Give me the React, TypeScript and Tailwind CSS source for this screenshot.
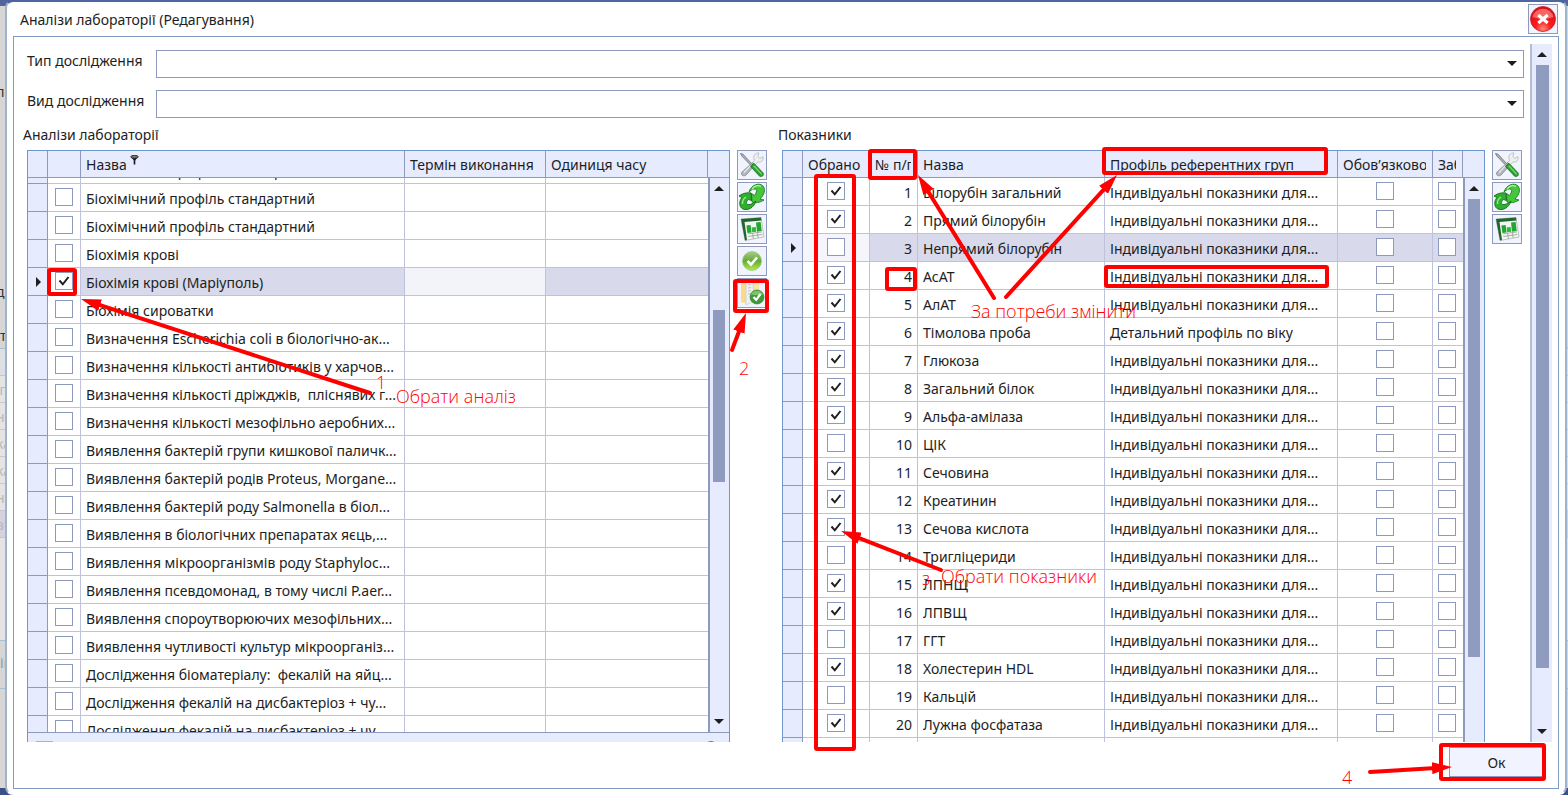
import { useState } from "react";
import type { ReactNode } from "react";
import clsx from "clsx";

type Analysis = { id: number; name: string };
type Indicator = { no: number; name: string; profile: string };

const ANALYSES: Analysis[] = [
  "Біохімічний профіль стандартний",
  "Біохімічний профіль стандартний",
  "Біохімічний профіль стандартний",
  "Біохімія крові",
  "Біохімія крові (Маріуполь)",
  "Біохімія сироватки",
  "Визначення Escherichia coli в біологічно-ак...",
  "Визначення кількості антибіотиків у харчов...",
  "Визначення кількості дріжджів,  пліснявих г...",
  "Визначення кількості мезофільно аеробних...",
  "Виявлення бактерій групи кишкової паличк...",
  "Виявлення бактерій родів Proteus, Morgane...",
  "Виявлення бактерій роду Salmonella в біол...",
  "Виявлення в біологічних препаратах яєць,...",
  "Виявлення мікроорганізмів роду Staphyloc...",
  "Виявлення псевдомонад, в тому числі P.aer...",
  "Виявлення спороутворюючих мезофільних...",
  "Виявлення чутливості культур мікроорганіз...",
  "Дослідження біоматеріалу:  фекалій на яйц...",
  "Дослідження фекалій на дисбактеріоз + чу...",
  "Дослідження фекалій на дисбактеріоз + чу...",
].map((name, id) => ({ id, name }));

const INDIVIDUAL = "Індивідуальні показники для...";

const INDICATORS: Indicator[] = [
  "Білорубін загальний",
  "Прямий білорубін",
  "Непрямий білорубін",
  "АсАТ",
  "АлАТ",
  "Тімолова проба",
  "Глюкоза",
  "Загальний білок",
  "Альфа-амілаза",
  "ЦІК",
  "Сечовина",
  "Креатинин",
  "Сечова кислота",
  "Тригліцериди",
  "ЛПНЩ",
  "ЛПВЩ",
  "ГГТ",
  "Холестерин HDL",
  "Кальцій",
  "Лужна фосфатаза",
].map((name, i) => ({
  no: i + 1,
  name,
  profile: i === 5 ? "Детальний профіль по віку" : INDIVIDUAL,
}));

const UNCHECKED = [3, 10, 14, 17, 19];

/* ---------- small controls ---------- */

function Check({ label, checked = false }: { label: string; checked?: boolean }) {
  const [on, setOn] = useState(checked);
  return (
    <span className="relative block size-[18px]">
      <input
        type="checkbox"
        aria-label={label}
        checked={on}
        onChange={(e) => setOn(e.target.checked)}
        className="block size-[18px] appearance-none border border-[#8e9abd] bg-white"
      />
      {on && (
        <svg viewBox="0 0 18 18" className="pointer-events-none absolute inset-0 size-[18px]">
          <path d="M4.5 8.5 L7.8 12.3 L13.5 5" fill="none" stroke="#1e1e1e" strokeWidth="2" />
        </svg>
      )}
    </span>
  );
}

function Caret({ up = false }: { up?: boolean }) {
  return (
    <svg viewBox="0 0 10 5" className="block h-[5px] w-[10px]">
      <path d={up ? "M0 5 L5 0 L10 5 Z" : "M0 0 L10 0 L5 5 Z"} fill="#1e1e1e" />
    </svg>
  );
}

function RowMarker() {
  return (
    <svg viewBox="0 0 5 10" className="mr-[6px] ml-auto block h-[10px] w-[5px]">
      <path d="M0 0 L5 5 L0 10 Z" fill="#1e1e1e" />
    </svg>
  );
}

function Field({ id, label }: { id: string; label: string }) {
  return (
    <div className="flex h-7 items-start">
      <label htmlFor={id} className="w-[129px] shrink-0 leading-[22px]">
        {label}
      </label>
      <div className="relative h-7 flex-1">
        <select id={id} className="h-7 w-full appearance-none border border-[#8e9abd] bg-white px-2">
          <option value=""></option>
        </select>
        <span className="pointer-events-none absolute top-[11px] right-[7px]">
          <Caret />
        </span>
      </div>
    </div>
  );
}

/* ---------- toolbar icons ---------- */

function ToolsIcon() {
  return (
    <svg viewBox="0 0 28 28" className="size-7">
      <path
        d="M16.5 9.5 C14.5 5 17 1.5 21 2 L19.8 5.5 L22 7.5 L25 5.5 C26 9 23 11.8 20 11 L17.5 13.5 L14 11.8 Z"
        fill="#eceeef"
        stroke="#b4babd"
        strokeWidth="0.8"
      />
      <path d="M14.5 11.5 L17 14 L8 24 C6 25.8 2.5 24.5 3.8 21.3 Z" fill="#b3b9bc" stroke="#7d8488" strokeWidth="0.8" />
      <path d="M6 21.5 L13.5 13.5" stroke="#e6e9ea" strokeWidth="1.2" />
      <path d="M2.5 2.5 L4.8 3 L15 14 L13.6 15.2 L4 5.2 Z" fill="#aeb4b8" stroke="#5d6468" strokeWidth="0.7" />
      <path d="M12.5 15.5 L16 12.3 L25.2 22 C26 24.6 23.8 26.4 21.6 25.2 Z" fill="#2c9f33" stroke="#167a1f" strokeWidth="0.8" />
      <path d="M15.8 14.8 L23.8 23.4" stroke="#7fd876" strokeWidth="1.3" />
    </svg>
  );
}

function RefreshIcon() {
  return (
    <svg viewBox="0 0 28 28" className="size-7">
      <path
        d="M11 9 C13 2 21 -1 25 3 C28 7 26 12 22 16 L26 17 C21 20 18 20 14 19 L13.5 10.5 L16.5 12.5 C19 9 19.5 6.5 17 6 C14.5 5.8 13 7.5 11 9 Z"
        fill="#45c63c"
        stroke="#17801c"
        strokeWidth="0.9"
      />
      <path
        d="M18 18 C16 25 9 28.5 4 25.5 C1 23 1 18 4 14.5 L1 13 C5 10 9 9.5 13 10 L13.5 17.5 L10.5 16.5 C8 18.5 7.5 21 10 21.5 C13 22 15 20 18 18 Z"
        fill="#2fb02c"
        stroke="#136f18"
        strokeWidth="0.9"
      />
      <path d="M14 6.5 C16 3 20 1.5 23 3.5" fill="none" stroke="#b5f3a8" strokeWidth="1.4" />
      <path d="M4.5 21 C4.3 18 5.5 15.5 8 14" fill="none" stroke="#9aec8d" strokeWidth="1.4" />
    </svg>
  );
}

function SheetIcon() {
  return (
    <svg viewBox="0 0 28 28" className="size-7">
      <path d="M3 4 L23 2.5 L26 22 L7 25.5 Z" fill="#f3f5f3" stroke="#a6b0a8" strokeWidth="0.7" />
      <path d="M3 4 L23 2.5 L23.4 5.5 L6.5 7 L9 25 L7 25.5 Z" fill="#20652c" />
      <path d="M8.4 10.5 L12.6 10 L13.6 17.4 L9.4 18 Z" fill="#22a531" />
      <path d="M13.6 12.6 L17.7 12 L18.2 16.8 L14.2 17.3 Z" fill="#2cb83a" />
      <path d="M18 7.5 L22.6 7 L23.8 16 L19 16.7 Z" fill="#22a531" />
      <path d="M9.9 18.8 L23.8 17 M10.3 21.5 L24.4 19.4 M14.6 18 L15.4 24 M19.4 17.4 L20.2 23" stroke="#8a938c" strokeWidth="0.7" />
    </svg>
  );
}

function AcceptIcon() {
  return (
    <svg viewBox="0 0 28 28" className="size-7">
      <defs>
        <linearGradient id="accept" x1="0" y1="0" x2="0" y2="1">
          <stop offset="0" stopColor="#a9cf8c" />
          <stop offset="0.5" stopColor="#63ab33" />
          <stop offset="1" stopColor="#b4ec55" />
        </linearGradient>
      </defs>
      <circle cx="14" cy="14" r="9.5" fill="url(#accept)" stroke="#8cbf6a" strokeWidth="0.6" />
      <path d="M9.5 14 L13 17.5 L19 10.5" fill="none" stroke="#fff" strokeWidth="2.6" />
    </svg>
  );
}

function FolderIcon() {
  return (
    <svg viewBox="0 0 28 28" className="size-7">
      <path d="M3 3 L9 1 L9 25 L3 23 Z" fill="#f8dc8c" />
      <path d="M15 3 L21 2 L22 20 L15 24 Z" fill="#fae6a6" />
      <path d="M8 2 L15 2 L16 22 L8 26 Z" fill="#eef0f1" stroke="#c9cccf" strokeWidth="0.7" />
      <path d="M10 6 L13 5.6 M10 9 L13 8.6 M10 12 L13 11.6 M10 15 L13 14.6" stroke="#b5b9bd" strokeWidth="0.8" />
      <circle cx="19" cy="18" r="7" fill="#3d9a34" stroke="#2a7a28" strokeWidth="0.6" />
      <path d="M12.8 15.5 A7 7 0 0 1 25.2 15.5 Q19 17 12.8 15.5 Z" fill="#7cc36c" />
      <path d="M15.5 18 L18.2 20.8 L22.5 15" fill="none" stroke="#fff" strokeWidth="2.2" />
    </svg>
  );
}

function CloseIcon() {
  return (
    <svg viewBox="0 0 28 28" className="size-7">
      <defs>
        <radialGradient id="close" cx="0.5" cy="0.9" r="0.9">
          <stop offset="0" stopColor="#ff8a7a" />
          <stop offset="0.35" stopColor="#fb1b1b" />
          <stop offset="1" stopColor="#d90d12" />
        </radialGradient>
      </defs>
      <circle cx="14" cy="14" r="12.5" fill="url(#close)" stroke="#c3202a" strokeWidth="0.8" />
      <path d="M3.5 12 A10.8 10.8 0 0 1 24.5 12 Q14 16 3.5 12 Z" fill="#ff9c98" opacity="0.6" />
      <path d="M9.3 10 L18.7 18 M18.7 10 L9.3 18" stroke="#fff" strokeWidth="3.2" />
    </svg>
  );
}

function ToolButton({ title, children }: { title: string; children: ReactNode }) {
  return (
    <button
      type="button"
      aria-label={title}
      className="flex size-[30px] items-center justify-center border border-[#8e9abd] bg-[#f1f4fe]"
    >
      {children}
    </button>
  );
}

/* ---------- grids ---------- */

const TABLE = "w-full table-fixed border-separate border-spacing-0";
const TH =
  "h-[27px] overflow-hidden border-r border-b border-[#8e9abd] bg-[#e6ecfe] pt-[2px] pr-[6px] pb-0 pl-[5px] text-left font-normal whitespace-nowrap";
const CELL = "h-7 overflow-hidden border-r border-b border-[#bfc2dc] whitespace-pre";
const TD = clsx(CELL, "px-[5px] pt-[2px] pb-0");
const CHECK_TD = clsx(CELL, "px-[5px] pt-0 pb-px");
const INDICATOR_TD = "h-7 border-r border-b border-[#8e9abd] bg-[#e6ecfe] p-0";

function HeadText({ children }: { children: ReactNode }) {
  return <span className="block overflow-hidden">{children}</span>;
}

function AnalysisCols() {
  return (
    <colgroup>
      <col className="w-5" />
      <col className="w-[33px]" />
      <col />
      <col className="w-[141px]" />
      <col className="w-[162px]" />
    </colgroup>
  );
}

function AnalysisGrid() {
  return (
    <div className="flex-1 border border-[#6d97cc]">
      <div className="flex bg-[#e6ecfe]">
        <table className={clsx(TABLE, "flex-1")}>
          <AnalysisCols />
          <thead>
            <tr>
              <th className={TH}></th>
              <th className={TH}></th>
              <th className={TH}>
                <span className="flex items-center gap-[3px]">
                  Назва
                  <svg viewBox="0 0 10 12" className="mb-[10px] h-[10px] w-[9px]">
                    <path d="M1 2 L9 2 L6 6.5 L6 11.5 L4 11.5 L4 6.5 Z" fill="#1e1e1e" />
                    <ellipse cx="5" cy="2.2" rx="4.5" ry="1.8" fill="#777" stroke="#1e1e1e" />
                  </svg>
                </span>
              </th>
              <th className={TH}>Термін виконання</th>
              <th className={TH}>Одиниця часу</th>
            </tr>
          </thead>
        </table>
        <div className="w-[21px] border-b border-[#8e9abd]" />
      </div>

      <div className="flex h-[554px] overflow-hidden">
        <div className="flex-1 overflow-hidden">
          {/* list is scrolled down, the first row is only just visible */}
          <table className={clsx(TABLE, "-mt-[22px]")}>
            <AnalysisCols />
            <tbody>
              {ANALYSES.map((row) => {
                const active = row.id === 4;
                return (
                  <tr key={row.id}>
                    <td className={INDICATOR_TD}>{active && <RowMarker />}</td>
                    <td className={CHECK_TD}>
                      <div className="flex justify-center">
                        <Check label={row.name} checked={active} />
                      </div>
                    </td>
                    <td className={clsx(TD, active && "bg-[#d8d9ea]")}>{row.name}</td>
                    <td className={clsx(TD, active && "bg-[#f3f3fa]")}></td>
                    <td className={clsx(TD, "border-r-0", active && "bg-[#d8d9ea]")}></td>
                  </tr>
                );
              })}
            </tbody>
          </table>
        </div>
        <div className="flex w-[21px] flex-col items-center border-l-2 border-[#8e9abd] bg-[#e6ecfe] pr-px">
          <div className="flex h-[21px] items-center">
            <Caret up />
          </div>
          <div className="mt-[111px] h-[172px] w-3 bg-[#8f9bbf]" />
          <div className="mt-auto flex h-[21px] items-center">
            <Caret />
          </div>
        </div>
      </div>
      <div className="flex h-[22px] justify-between border-t border-[#8e9abd] bg-[#e6ecfe] px-2 pt-[8px]">
        <div className="h-3 w-[17px] bg-[#a7b1cc]" />
        <div className="mr-1 size-3 rounded-full bg-[#777]" />
      </div>
    </div>
  );
}

function IndicatorGrid() {
  return (
    <div className="flex flex-1 border border-[#6d97cc]">
      <table className={clsx(TABLE, "flex-1 self-start")}>
        <colgroup>
          <col className="w-5" />
          <col className="w-[67px]" />
          <col className="w-12" />
          <col />
          <col className="w-[233px]" />
          <col className="w-[95px]" />
          <col className="w-[30px]" />
        </colgroup>
        <thead>
          <tr>
            <th className={TH}></th>
            <th className={TH}><HeadText>Обрано</HeadText></th>
            <th className={TH}><HeadText>№ п/п</HeadText></th>
            <th className={TH}><HeadText>Назва</HeadText></th>
            <th className={TH}><HeadText>Профіль референтних груп</HeadText></th>
            <th className={TH}><HeadText>Обов’язково</HeadText></th>
            <th className={TH}><HeadText>Заборона</HeadText></th>
          </tr>
        </thead>
        <tbody>
          {INDICATORS.map((row) => {
            const active = row.no === 3;
            const fill = active && "bg-[#d8d9ea]";
            return (
              <tr key={row.no}>
                <td className={INDICATOR_TD}>{active && <RowMarker />}</td>
                <td className={clsx(CHECK_TD, active && "bg-[#f6f5fb]")}>
                  <div className="flex justify-center">
                    <Check label={`Обрано ${row.no}`} checked={!UNCHECKED.includes(row.no)} />
                  </div>
                </td>
                <td className={clsx(TD, "text-right", fill)}>{row.no}</td>
                <td className={clsx(TD, fill)}>{row.name}</td>
                <td className={clsx(TD, fill)}>{row.profile}</td>
                <td className={clsx(CHECK_TD, fill)}>
                  <div className="flex justify-center">
                    <Check label={`Обов’язково ${row.no}`} />
                  </div>
                </td>
                <td className={clsx(CHECK_TD, "border-r-0", fill)}>
                  <Check label={`Заборона ${row.no}`} />
                </td>
              </tr>
            );
          })}
          <tr>
            <td className={INDICATOR_TD}></td>
            <td className={TD}></td>
            <td className={TD}></td>
            <td className={TD}></td>
            <td className={TD}></td>
            <td className={TD}></td>
            <td className={clsx(TD, "border-r-0")}></td>
          </tr>
        </tbody>
      </table>
      <div className="flex w-[21px] shrink-0 flex-col bg-[#e6ecfe]">
        <div className="h-[27px] border-b border-[#8e9abd]" />
        <div className="flex flex-1 flex-col items-center border-l-2 border-[#8e9abd] pr-px">
          <div className="flex h-[21px] items-center">
            <Caret up />
          </div>
          <div className="h-[458px] w-3 bg-[#8f9bbf]" />
        </div>
      </div>
    </div>
  );
}

/* ---------- page behind the dialog ---------- */

function Backdrop() {
  const rows = ["іп", "на", "ка", "ка", "на", "ві"];
  return (
    <div className="flex h-full flex-col bg-[#d6d6d6] text-[#333]" aria-hidden="true">
      <div className="h-[6px] bg-[#53649c]" />
      <div className="h-[76px]" />
      <div className="-ml-1 h-[200px]">пс</div>
      <div className="-ml-1 h-[44px]">др</div>
      <div className="h-[23px] border-b border-[#a9bccb]">т</div>
      <div className="h-[27px] border-b border-[#c1c5d4] bg-[#dedee5]" />
      {rows.map((text, i) => (
        <div
          key={i}
          className={clsx(
            "-ml-1 h-[27px] border-b border-[#c6c8d6] pt-1 text-[#b9b9b9]",
            i === 5 ? "bg-[#d3d2de]" : "bg-[#e4e4e4]",
          )}
        >
          {text}
        </div>
      ))}
      <div className="h-[103px] border-b border-[#a9bccb] bg-[#e4e4e4]" />
      <div className="h-[48px] border-b border-[#a9bccb] pt-3 text-[#8d9cb5]">ін</div>
      <div className="flex-1" />
      <div className="h-[7px] bg-[#3d4f89]" />
    </div>
  );
}

/* ---------- hints drawn over the form ---------- */

const FRAMES = [
  [49, 270, 26, 24],
  [735, 281, 32, 30],
  [816, 176, 38, 573],
  [870, 151, 45, 27],
  [1104, 149, 222, 24],
  [887, 269, 28, 20],
  [1106, 267, 221, 19],
  [1441, 745, 103, 34],
];

// x1, y1 -> x2, y2 (tip)
const ARROWS = [
  [370, 393, 81, 299],
  [732, 350, 746, 313],
  [994, 298, 918, 175],
  [1006, 297, 1117, 175],
  [941, 570, 841, 531],
  [1370, 772, 1452, 767],
];

function Hints() {
  const note = "absolute font-['Open_Sans','Noto_Sans',sans-serif] text-lg leading-5 font-light whitespace-nowrap";
  return (
    <div className="pointer-events-none absolute inset-0 overflow-hidden text-[#ff0000]">
      <svg className="absolute top-0 left-0 h-[795px] w-[1568px]" viewBox="0 0 1568 795">
        <defs>
          <marker id="tip" markerUnits="userSpaceOnUse" markerWidth="20" markerHeight="12" refX="20" refY="6" orient="auto">
            <path d="M0 0 L20 6 L0 12 Z" fill="#ff0000" />
          </marker>
        </defs>
        {FRAMES.map(([x, y, w, h]) => (
          <rect key={`${x}-${y}`} x={x} y={y} width={w} height={h} rx="1" fill="none" stroke="#ff0000" strokeWidth="4" />
        ))}
        {ARROWS.map(([x1, y1, x2, y2]) => {
          // the shaft stops short of the tip so that it stays sharp
          const len = Math.hypot(x2 - x1, y2 - y1);
          const k = (len - 12) / len;
          return (
            <g key={`${x1}-${y1}`}>
              <line x1={x1} y1={y1} x2={x1 + (x2 - x1) * k} y2={y1 + (y2 - y1) * k} stroke="#ff0000" strokeWidth="4" strokeLinecap="round" />
              <line x1={x1} y1={y1} x2={x2} y2={y2} stroke="none" markerEnd="url(#tip)" />
            </g>
          );
        })}
      </svg>
      <span className={clsx(note, "top-[372px] left-[376px]")}>1</span>
      <span className={clsx(note, "top-[386px] left-[396px]")}>Обрати аналіз</span>
      <span className={clsx(note, "top-[358px] left-[739px]")}>2</span>
      <span className={clsx(note, "top-[301px] left-[971px]")}>За потреби змінити</span>
      <span className={clsx(note, "top-[568px] left-[922px]")}>з</span>
      <span className={clsx(note, "top-[566px] left-[941px]")}>Обрати показники</span>
      <span className={clsx(note, "top-[767px] left-[1342px]")}>4</span>
    </div>
  );
}

export default function App() {
  return (
    <div className="relative h-screen overflow-hidden bg-[#dfe4ec] font-['Noto_Sans',sans-serif] text-sm leading-5 text-[#1e1e1e]">
      <Backdrop />

      <div
        role="dialog"
        aria-labelledby="dialog-title"
        className="absolute inset-y-0 right-[1px] left-[5px] flex flex-col rounded-lg border-2 border-t-[#4b66a3] border-r-[#9fb4ca] border-b-white border-l-[#9fb4ca] bg-white pr-[6px] pb-[4px] pl-[6px]"
      >
        <header className="flex h-[34px] items-center justify-between pr-px pl-[7px]">
          <h1 id="dialog-title" className="pt-[2px]">
            Аналізи лабораторії (Редагування)
          </h1>
          <button
            type="button"
            aria-label="Закрити"
            className="flex size-[30px] items-center justify-center border border-[#8e9abd] bg-[#f1f4fe]"
          >
            <CloseIcon />
          </button>
        </header>

        <main className="flex min-h-0 flex-1 flex-col border border-[#7f9bbf] pt-[7px]">
          <div className="flex min-h-0 flex-1 pr-[6px]">
            <div className="flex min-w-0 flex-1 flex-col overflow-hidden pt-[6px] pr-[6px] pl-[13px]">
              <div className="flex flex-col gap-3">
                <Field id="study-type" label="Тип дослідження" />
                <Field id="study-kind" label="Вид дослідження" />
              </div>

              <div className="mt-[6px] grid grid-cols-2 gap-[14px] pr-px">
                <section className="min-w-0">
                  <h2 className="-ml-1 h-[26px] leading-[22px]">Аналізи лабораторії</h2>
                  <div className="flex gap-[7px] pr-px">
                    <AnalysisGrid />
                    <div className="flex flex-col gap-[2px]">
                      <ToolButton title="Налаштування"><ToolsIcon /></ToolButton>
                      <ToolButton title="Оновити"><RefreshIcon /></ToolButton>
                      <ToolButton title="Експорт"><SheetIcon /></ToolButton>
                      <ToolButton title="Підтвердити"><AcceptIcon /></ToolButton>
                      <ToolButton title="Обрати"><FolderIcon /></ToolButton>
                    </div>
                  </div>
                </section>

                <section className="min-w-0">
                  <h2 className="-ml-1 h-[26px] leading-[22px]">Показники</h2>
                  <div className="flex gap-[7px] pr-px">
                    <IndicatorGrid />
                    <div className="flex flex-col gap-[2px]">
                      <ToolButton title="Налаштування"><ToolsIcon /></ToolButton>
                      <ToolButton title="Оновити"><RefreshIcon /></ToolButton>
                      <ToolButton title="Експорт"><SheetIcon /></ToolButton>
                    </div>
                  </div>
                </section>
              </div>
            </div>

            {/* form scrollbar */}
            <div className="flex w-[22px] flex-col items-center border-l-2 border-[#b4bcd4] bg-[#e6ecfe]">
              <div className="flex h-[21px] items-center">
                <Caret up />
              </div>
              <div className="h-[603px] w-[13px] bg-[#8f9bbf]" />
              <div className="mt-auto flex h-[21px] items-center">
                <Caret />
              </div>
            </div>
          </div>

          <footer className="flex justify-end pt-[5px] pr-[14px] pb-[11px]">
            <button type="button" className="h-[30px] w-[95px] border border-[#8e9abd] bg-[#f1f4fe] pt-[2px]">
              Ок
            </button>
          </footer>
        </main>
      </div>

      <Hints />
    </div>
  );
}
